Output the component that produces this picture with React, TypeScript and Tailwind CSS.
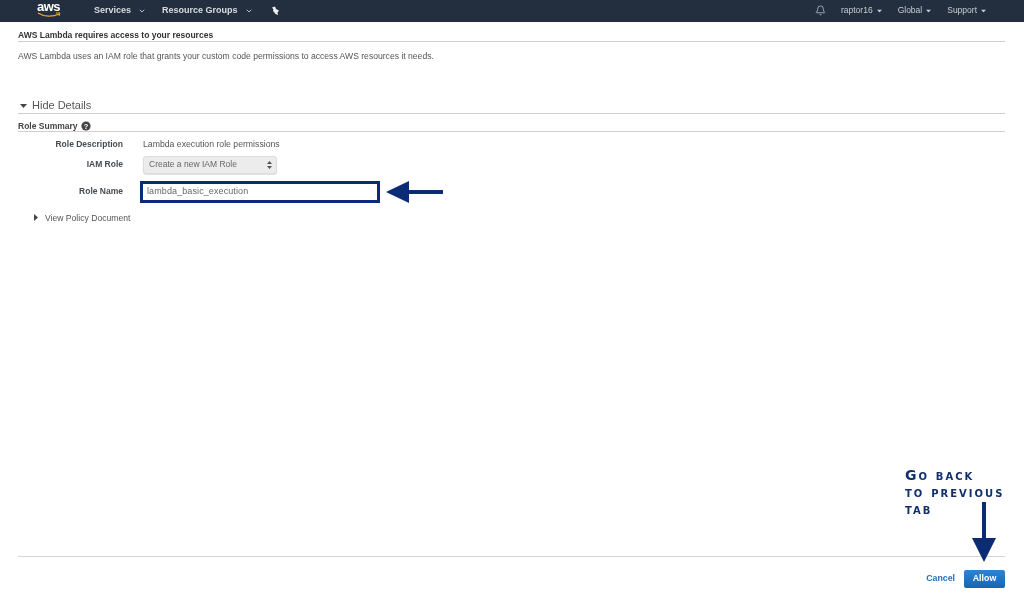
import { Bell, ChevronDown } from "lucide-react";

function Caret({ className }: { className: string }) {
  return (
    <svg width="7" height="4" viewBox="0 0 7 4" className={className}>
      <path d="M0 0h7L3.5 4z" fill="currentColor" />
    </svg>
  );
}

function NavItem({ label }: { label: string }) {
  return (
    <div className="flex items-center gap-[3px] text-[8.5px] text-[#c9ced4]">
      <span>{label}</span>
      <Caret className="text-[#c9ced4] scale-75" />
    </div>
  );
}

function Row({ label, children }: { label: string; children: React.ReactNode }) {
  return (
    <div className="flex items-center">
      <div className="w-[105px] text-right text-[8.5px] font-bold text-[#444b52]">{label}</div>
      <div className="ml-[20px]">{children}</div>
    </div>
  );
}

export default function App() {
  return (
    <div className="relative flex h-[600px] w-[1024px] flex-col overflow-hidden bg-white font-['Liberation_Sans',Arial,sans-serif] text-[#444] blur-[0.35px]">
      <header className="flex h-[22px] shrink-0 items-center bg-[#232f3e]">
        <div className="relative ml-[37px] h-[22px] w-[24px]">
          <span className="absolute left-0 top-[1px] text-[13px] font-bold leading-[12px] tracking-[-0.5px] text-white">aws</span>
          <svg width="24" height="6" viewBox="0 0 24 6" className="absolute left-0 top-[12px]">
            <path d="M1 1c6 4 15 4 21 1" fill="none" stroke="#e9a23b" strokeWidth="1.2" />
            <path d="M19 1h4l-1 3" fill="none" stroke="#e9a23b" strokeWidth="1" />
          </svg>
        </div>
        <div className="ml-[33px] flex items-center gap-[7px] text-[9px] font-bold text-[#d8dce0]">
          <span>Services</span>
          <ChevronDown size={8} strokeWidth={3} className="text-[#b8bec5]" />
        </div>
        <div className="ml-[16px] flex items-center gap-[7px] text-[9px] font-bold text-[#d8dce0]">
          <span>Resource Groups</span>
          <ChevronDown size={8} strokeWidth={3} className="text-[#b8bec5]" />
        </div>
        <svg width="10" height="10" viewBox="0 0 10 10" className="ml-[17px] text-[#f0f2f4]">
          <path d="M2 1.5L5 0.5L6 3L9 4.5L7.5 6.5L8 9L5.5 8L4 6L3 5L3.5 3.5z" fill="currentColor" />
        </svg>
        <div className="ml-auto mb-[1px] mr-[37px] flex items-center">
          <Bell size={11} strokeWidth={1.6} className="mr-[15px] text-[#c9ced4]" />
          <NavItem label="raptor16" />
          <div className="ml-[15px]"><NavItem label="Global" /></div>
          <div className="ml-[15px]"><NavItem label="Support" /></div>
        </div>
      </header>

      <main className="flex flex-1 flex-col pl-[18px] pr-[19px]">
        <div className="mt-[8px] border-b border-[#cfcfcf] pb-[1px] text-[8.5px] font-bold leading-[10px] text-[#333]">
          AWS Lambda requires access to your resources
        </div>
        <p className="mt-[9px] text-[8.6px] leading-[10px] text-[#555]">
          AWS Lambda uses an IAM role that grants your custom code permissions to access AWS resources it needs.
        </p>

        <div className="mt-[38px] flex items-center border-b border-[#cfcfcf] pb-[1px] pl-[2px]">
          <Caret className="text-[#444] mr-[5px]" />
          <span className="text-[11px] leading-[13px] text-[#555]">Hide Details</span>
        </div>
        <div className="mt-[7px] flex items-center border-b border-[#cfcfcf]">
          <span className="text-[8.5px] font-bold leading-[10px] text-[#444]">Role Summary</span>
          <svg width="10" height="10" viewBox="0 0 10 10" className="ml-[3px]">
            <circle cx="5" cy="5" r="4.6" fill="#444" />
            <text x="5" y="7.7" textAnchor="middle" fontSize="7.5" fontWeight="700" fill="#fff">?</text>
          </svg>
        </div>

        <div className="mt-[6px] flex flex-col">
          <Row label="Role Description">
            <span className="block text-[8.7px] leading-[12px] text-[#555]">Lambda execution role permissions</span>
          </Row>
          <div className="mt-[5px]">
            <Row label="IAM Role">
              <div className="flex h-[18px] w-[134px] items-center justify-between rounded-[3px] border border-[#dcdcdc] bg-[#ececec] pl-[5px] pr-[4px] text-[8.5px] text-[#666] shadow-[0_1px_1px_rgba(0,0,0,0.12)]">
                <span>Create a new IAM Role</span>
                <svg width="5" height="8" viewBox="0 0 5 8"><path d="M2.5 0L5 3H0zM2.5 8L0 5h5z" fill="#555" /></svg>
              </div>
            </Row>
          </div>
          <div className="mt-[7px]">
            <Row label="Role Name">
              <div className="ml-[-3px] flex h-[22px] w-[240px] items-center border-[3px] border-[#0b2c74] bg-white pl-[4px] text-[9px] tracking-[0.1px] text-[#666]">
                lambda_basic_execution
              </div>
            </Row>
          </div>
        </div>

        <div className="mt-[9px] ml-[16px] flex items-center text-[8.6px] leading-[12px] text-[#555]">
          <svg width="4" height="7" viewBox="0 0 4 7" className="mr-[7px]"><path d="M0 0l4 3.5L0 7z" fill="#444" /></svg>
          View Policy Document
        </div>

        <div className="mt-auto flex h-[44px] items-center justify-end border-t border-[#d5d5d5] pt-[1px]">
          <span className="mr-[9px] text-[8.8px] font-bold text-[#2a6fb5]">Cancel</span>
          <button className="h-[18px] w-[41px] rounded-[2px] bg-gradient-to-b from-[#2f83d3] to-[#1465b3] text-[8.8px] font-bold text-white">
            Allow
          </button>
        </div>
      </main>

      <svg width="58" height="22" viewBox="0 0 58 22" className="absolute left-[386px] top-[181px]">
        <path d="M0 11L23 0v9h34v4H23V22z" fill="#0b2c74" />
      </svg>

      <div className="absolute left-[905px] top-[467px] text-[14px] font-bold leading-[17px] tracking-[2px] text-[#0f2f6e] font-['DejaVu_Sans',sans-serif] [font-variant-caps:small-caps]">
        Go back<br />to previous<br />tab
      </div>
      <svg width="24" height="60" viewBox="0 0 24 60" className="absolute left-[972px] top-[502px]">
        <path d="M10 0h4v36h10L12 60 0 36h10z" fill="#0b2c74" />
      </svg>
    </div>
  );
}
